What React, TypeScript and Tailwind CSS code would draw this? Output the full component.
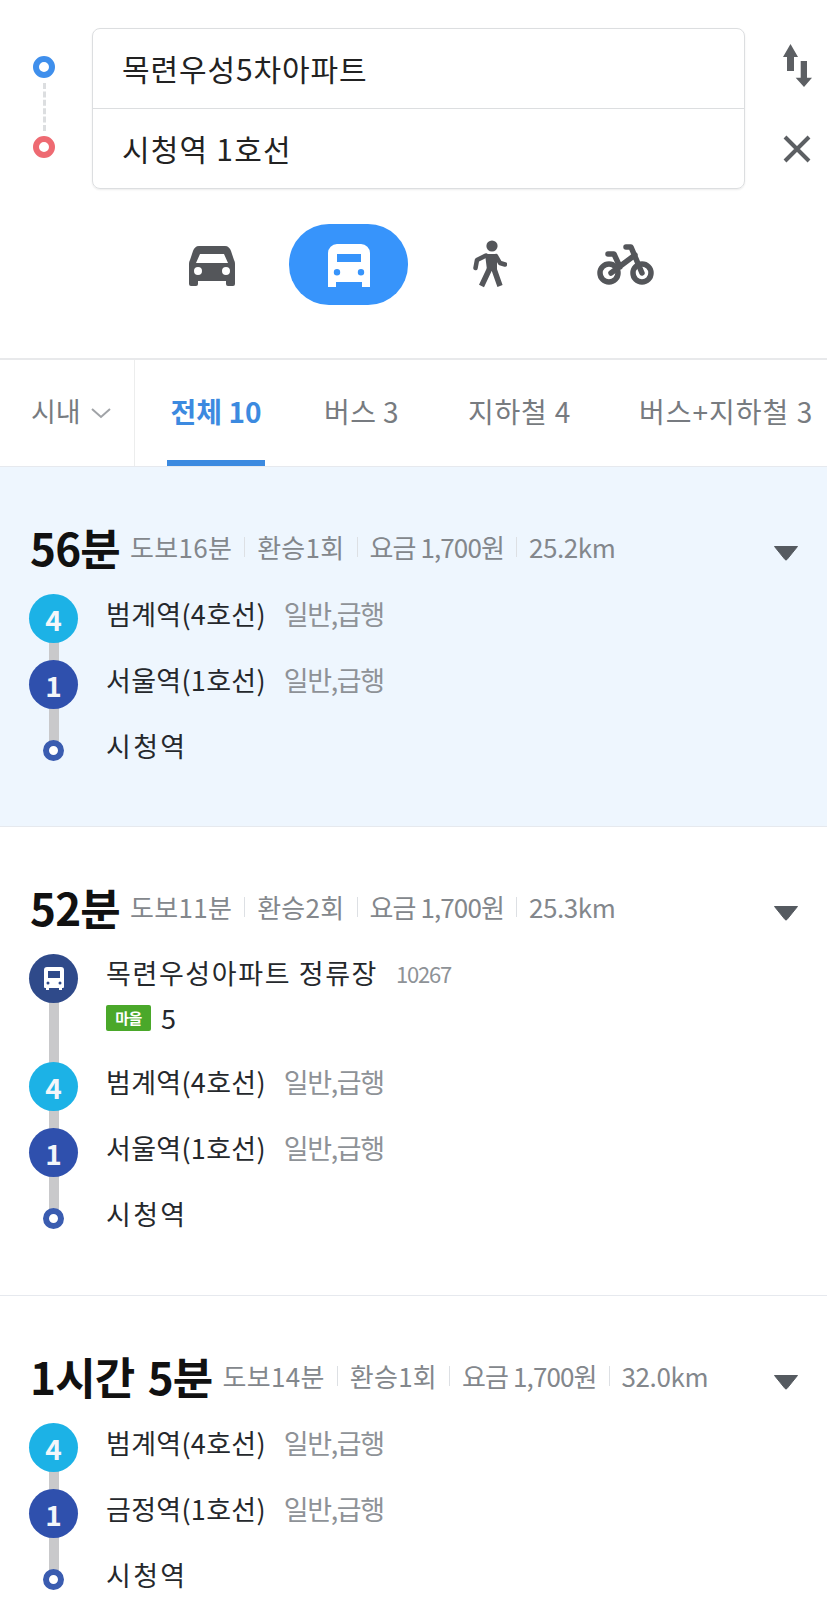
import React from "react";

const font = { fontFamily: '"Noto Sans CJK KR", "Noto Sans", sans-serif' };

function Sep() {
  return <span className="mx-[12px] inline-block h-[20px] w-px bg-[#dde0e4]" />;
}

function Header({ time, walk, transfer, dist }: { time: string; walk: string; transfer: string; dist: string }) {
  return (
    <div className="flex h-[50px] items-center pl-[30px] pr-[28px]">
      <span className="mr-[10px] whitespace-nowrap text-[44px] font-bold leading-[50px] tracking-[-0.8px] text-[#111] [word-spacing:4px]">{time}</span>
      <span className="flex items-center whitespace-nowrap text-[26px] leading-[50px] tracking-[0.3px] text-[#83878c]">
        <span>{walk}</span>
        <Sep />
        <span>{transfer}</span>
        <Sep />
        <span className="tracking-[-0.9px]">요금 1,700원</span>
        <Sep />
        <span className="tracking-[-0.4px]">{dist}</span>
      </span>
      <svg className="ml-auto mt-[12px]" width="26" height="16" viewBox="0 0 26 16">
        <path d="M1.5 1.5h23L14 14.5q-1 1-2 0z" fill="#555a60" stroke="#555a60" strokeLinejoin="round" />
      </svg>
    </div>
  );
}

function Circle({ kind }: { kind: string }) {
  if (kind === "dot") {
    return <span className="z-10 h-[21px] w-[21px] rounded-full border-[6px] border-[#3a5cb0] bg-white" />;
  }
  if (kind === "bus") {
    return (
      <span className="z-10 flex h-[49px] w-[49px] items-center justify-center rounded-full bg-[#2f4a8a]">
        <svg width="24" height="26" viewBox="0 0 24 26">
          <path fillRule="evenodd" fill="#fff" d="M5 1h14a3 3 0 0 1 3 3v17a1 1 0 0 1-1 1h-1v2h-3v-2H7v2H4v-2H3a1 1 0 0 1-1-1V4a3 3 0 0 1 3-3zm1 4v7h12V5zm0 10.5a1.5 1.5 0 1 0 0 3 1.5 1.5 0 0 0 0-3zm12 0a1.5 1.5 0 1 0 0 3 1.5 1.5 0 0 0 0-3z" />
        </svg>
      </span>
    );
  }
  const bg = kind === "4" ? "bg-[#1cb2e6]" : "bg-[#2f50ad]";
  return (
    <span className={`z-10 flex h-[49px] w-[49px] items-center justify-center rounded-full text-[28px] font-bold leading-none text-[#f3f6fa] ${bg}`}>
      {kind}
    </span>
  );
}

function Stop({ kind, name, extra, h }: { kind: string; name: string; extra?: string; h: string }) {
  return (
    <div className={`flex items-start pl-[29px] ${h}`}>
      <div className="flex h-[49px] w-[49px] items-center justify-center">
        <Circle kind={kind} />
      </div>
      <div className="ml-[28px] flex h-[41px] items-center whitespace-nowrap text-[27px] text-[#25282c]">
        <span className={extra ? "tracking-[0.3px]" : "tracking-[2.3px]"}>{name}</span>
        {extra && <span className="ml-[18px] tracking-[-1.4px] text-[#8e9297]">{extra}</span>}
      </div>
    </div>
  );
}

function Rail({ h }: { h: string }) {
  return <div className={`absolute left-[49px] top-[20px] w-[10px] bg-[#c9c9cb] ${h}`} />;
}

function Car() {
  return (
    <svg width="46" height="40" viewBox="0 0 46 40">
      <path
        fillRule="evenodd"
        fill="#54565a"
        d="M10 0h26c3 0 5 2 6 5l3 9c1 2 1 3 1 5v19a2 2 0 0 1-2 2h-5a2 2 0 0 1-2-2v-3H9v3a2 2 0 0 1-2 2H2a2 2 0 0 1-2-2V19c0-2 0-3 1-5l3-9c1-3 3-5 6-5zm1 8l-4 9h32l-4-9zM9 21a4 4 0 1 0 0 8 4 4 0 0 0 0-8zm28 0a4 4 0 1 0 0 8 4 4 0 0 0 0-8z"
      />
    </svg>
  );
}

function Bus() {
  return (
    <svg width="42" height="43" viewBox="0 0 42 43">
      <path
        fillRule="evenodd"
        fill="#fff"
        d="M9 0h24a9 9 0 0 1 9 9v34h-8v-5H8v5H0V9a9 9 0 0 1 9-9zm0 10v8h24v-8zm0 15a3.2 3.2 0 1 0 0 6.4 3.2 3.2 0 0 0 0-6.4zm24 0a3.2 3.2 0 1 0 0 6.4 3.2 3.2 0 0 0 0-6.4z"
      />
    </svg>
  );
}

function Walker() {
  return (
    <svg width="35" height="49" viewBox="0 0 35 49" fill="none" stroke="#54565a" strokeLinecap="round" strokeLinejoin="round">
      <circle cx="20" cy="6" r="5.6" fill="#54565a" stroke="none" />
      <path d="M13 14h12v16H15z" fill="#54565a" stroke="none" />
      <path d="M14 15.500L5 20l-1.500 8M24 16l4 7 5 1.500" strokeWidth="4.500" />
      <path d="M17.500 29L9.500 46M22 29l6 17" strokeWidth="5.500" strokeLinecap="butt" />
    </svg>
  );
}

function Bike() {
  return (
    <svg width="57" height="41" viewBox="0 0 57 41" fill="none" stroke="#54565a" strokeWidth="5.500" strokeLinecap="round" strokeLinejoin="round">
      <circle cx="12" cy="29" r="9" />
      <circle cx="45" cy="29" r="9" />
      <path d="M14 29L38 11M29 3h5l11 26M11 10h6l6 13" />
    </svg>
  );
}

function Tab({ children, cls }: { children: React.ReactNode; cls: string }) {
  return <div className={`flex h-full items-center whitespace-nowrap pb-[4px] ${cls}`}>{children}</div>;
}

export default function App() {
  return (
    <div className="h-[1605px] w-[827px] overflow-hidden bg-white" style={font}>
      {/* search */}
      <div className="flex h-[224px] items-start pt-[28px]">
        <div className="flex h-[160px] w-[92px] flex-col items-center pr-[4px]">
          <span className="mt-[28px] h-[22px] w-[22px] rounded-full border-[6px] border-[#3f8fec] bg-white" />
          <span className="my-[5px] h-[48px] border-l-[3px] border-dashed border-[#dcdee0]" />
          <span className="h-[22px] w-[22px] rounded-full border-[6px] border-[#ee6a72] bg-white" />
        </div>
        <div className="h-[161px] w-[653px] rounded-[8px] border border-[#dcdee0] shadow-[0_1px_2px_rgba(0,0,0,0.08)]">
          <div className="flex h-[80px] items-center border-b border-[#dcdee0] pl-[29px] text-[30px] tracking-[0.9px] text-[#222]">목련우성5차아파트</div>
          <div className="flex h-[79px] items-center pl-[29px] text-[30px] tracking-[1.2px] text-[#222]">시청역 1호선</div>
        </div>
        <div className="flex flex-col items-center pl-[37px]">
          <svg className="mt-[16px]" width="30" height="43" viewBox="0 0 30 43" fill="#5c5f63">
            <path d="M8.500 0L16 13h-4v14H5V13H1zM18.700 17H25v16.700h5L22 43l-8.300-9.300h5z" />
          </svg>
          <svg className="mt-[48px]" width="28" height="28" viewBox="0 0 28 28" stroke="#5c5f63" strokeWidth="4" fill="none">
            <path d="M2 2l24 24M26 2L2 26" />
          </svg>
        </div>
      </div>
      {/* modes */}
      <div className="flex h-[136px] items-start border-b-2 border-[#e8e9eb] pl-[189px]">
        <div className="flex h-[81px] w-[46px] items-center justify-center pt-[2px]"><Car /></div>
        <div className="ml-[54px] flex h-[81px] w-[119px] items-center justify-center rounded-[40px] bg-[#3794fb] pt-[2px]"><Bus /></div>
        <div className="ml-[64px] flex h-[81px] w-[35px] items-center justify-center"><Walker /></div>
        <div className="ml-[90px] flex h-[81px] w-[57px] items-center justify-center"><Bike /></div>
      </div>
      {/* tabs */}
      <div className="relative flex h-[107px] items-center border-b border-[#e6e9ee] text-[28px] text-[#777b80]">
        <Tab cls="w-[135px] border-r border-[#eceded] pl-[31px] text-[27px]">
          <span>시내</span>
          <svg className="ml-[10px] mt-[4px]" width="20" height="11" viewBox="0 0 20 11" fill="none" stroke="#a0a3a7" strokeWidth="2"><path d="M1 1l9 8 9-8" /></svg>
        </Tab>
        <div className="relative ml-[32px] flex h-full w-[98px] items-center justify-center whitespace-nowrap pb-[4px] font-bold text-[#3c8ae0]">
          전체 10
          <span className="absolute bottom-0 left-0 h-[6px] w-full bg-[#3c8ae0]" />
        </div>
        <Tab cls="ml-[59px] tracking-[0.4px]">버스 3</Tab>
        <Tab cls="ml-[69px] tracking-[0.8px]">지하철 4</Tab>
        <Tab cls="ml-[68px] tracking-[1px]">버스+지하철 3</Tab>
      </div>
      {/* card 1 */}
      <div className="h-[360px] border-b border-[#e6e9ee] bg-[#eef6fe] pt-[55px]">
        <Header time="56분" walk="도보16분" transfer="환승1회" dist="25.2km" />
        <div className="relative mt-[22px]">
          <Rail h="h-[130px]" />
          <Stop kind="4" name="범계역(4호선)" extra="일반,급행" h="h-[66px]" />
          <Stop kind="1" name="서울역(1호선)" extra="일반,급행" h="h-[66px]" />
          <Stop kind="dot" name="시청역" h="h-[49px]" />
        </div>
      </div>
      {/* card 2 */}
      <div className="h-[469px] border-b border-[#e6e9ee] pt-[55px]">
        <Header time="52분" walk="도보11분" transfer="환승2회" dist="25.3km" />
        <div className="relative mt-[22px]">
          <Rail h="h-[240px]" />
          <div className="flex h-[108px] items-start pl-[29px]">
            <div className="flex h-[49px] w-[49px] items-center justify-center"><Circle kind="bus" /></div>
            <div className="ml-[28px] flex flex-col">
              <div className="flex h-[39px] items-center whitespace-nowrap text-[27px] tracking-[1.6px] text-[#25282c]">
                목련우성아파트 정류장
                <span className="ml-[18px] text-[22px] tracking-[-1.2px] text-[#8e9297]">10267</span>
              </div>
              <div className="mt-[10px] flex items-center">
                <span className="flex h-[26px] w-[45px] items-center justify-center rounded-[2px] bg-[#4aa82a] text-[15px] font-bold tracking-[-0.5px] text-white">마을</span>
                <span className="ml-[10px] text-[27px] leading-[30px] text-[#25282c]">5</span>
              </div>
            </div>
          </div>
          <Stop kind="4" name="범계역(4호선)" extra="일반,급행" h="h-[66px]" />
          <Stop kind="1" name="서울역(1호선)" extra="일반,급행" h="h-[66px]" />
          <Stop kind="dot" name="시청역" h="h-[49px]" />
        </div>
      </div>
      {/* card 3 */}
      <div className="pt-[55px]">
        <Header time="1시간 5분" walk="도보14분" transfer="환승1회" dist="32.0km" />
        <div className="relative mt-[22px]">
          <Rail h="h-[130px]" />
          <Stop kind="4" name="범계역(4호선)" extra="일반,급행" h="h-[66px]" />
          <Stop kind="1" name="금정역(1호선)" extra="일반,급행" h="h-[66px]" />
          <Stop kind="dot" name="시청역" h="h-[49px]" />
        </div>
      </div>
    </div>
  );
}
